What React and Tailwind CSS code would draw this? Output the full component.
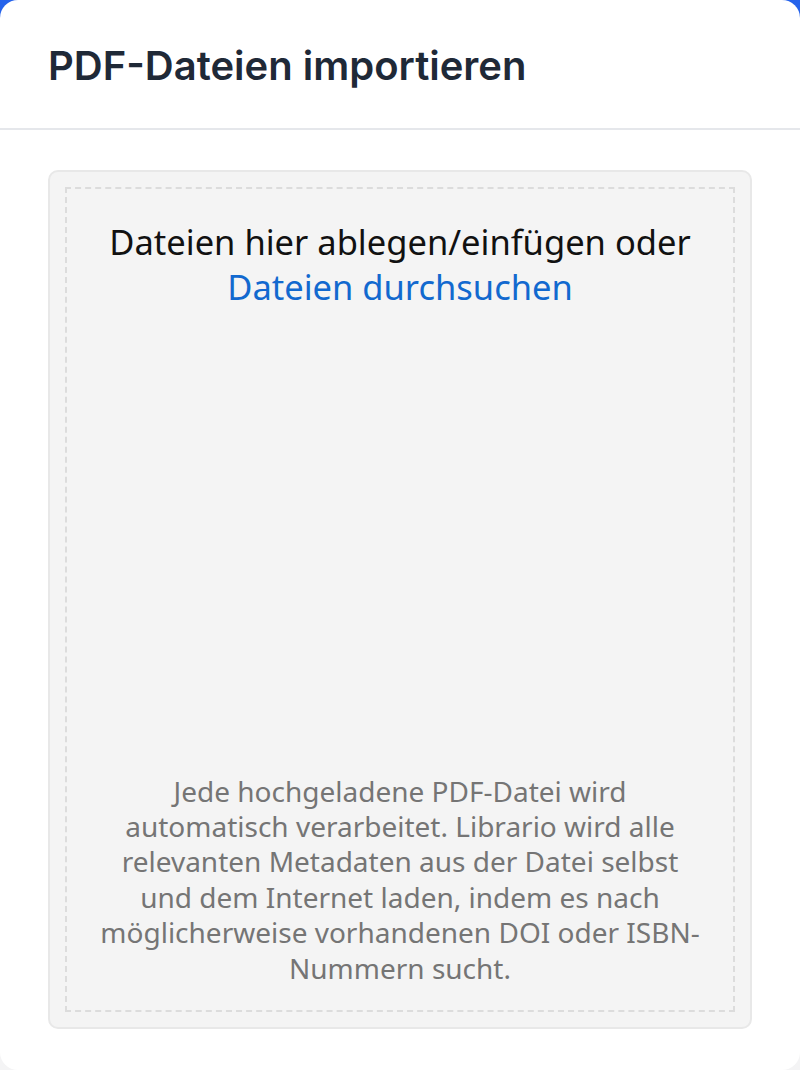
export default function App() {
  return (
    <div className="h-[1070px] w-full bg-[linear-gradient(to_bottom,#2563eb_0%,#2563eb_50%,#f4f4f5_50%,#f4f4f5_100%)]">
      <div className="flex h-full flex-col rounded-[18px] bg-white">
        <header className="flex h-[130px] shrink-0 items-center border-b-2 border-[#e5e7eb] px-12 pt-[3px]">
          <h2
            className="text-[40px] font-semibold leading-none text-[#1f2937]"
            style={{ fontFamily: 'Inter, "Liberation Sans", sans-serif' }}
          >
            PDF-Dateien importieren
          </h2>
        </header>

        <div className="flex-1 px-12 pt-10 pb-[41px]" style={{ fontFamily: '"Noto Sans", "Open Sans", sans-serif' }}>
          <div className="flex h-full flex-col rounded-[10px] border-2 border-[#e8e8e8] bg-[#f4f4f4] p-[15px]">
            <div className="flex flex-1 flex-col items-center justify-between border-2 border-dashed border-[#dcdcdc] px-4 pt-[30px] pb-[24px] text-center">
              <div className="text-[34.5px] leading-[45px] text-[#111111]">
                Dateien hier ablegen/einfügen oder
                <br />
                <button type="button" className="text-[#1269cf] hover:underline">
                  Dateien durchsuchen
                </button>
              </div>
              <p className="whitespace-nowrap text-[28px] leading-[35.4px] text-[#757575]">
                Jede hochgeladene PDF-Datei wird
                <br />
                automatisch verarbeitet. Librario wird alle
                <br />
                relevanten Metadaten aus der Datei selbst
                <br />
                und dem Internet laden, indem es nach
                <br />
                möglicherweise vorhandenen DOI oder ISBN-
                <br />
                Nummern sucht.
              </p>
            </div>
          </div>
        </div>
      </div>
    </div>
  );
}
